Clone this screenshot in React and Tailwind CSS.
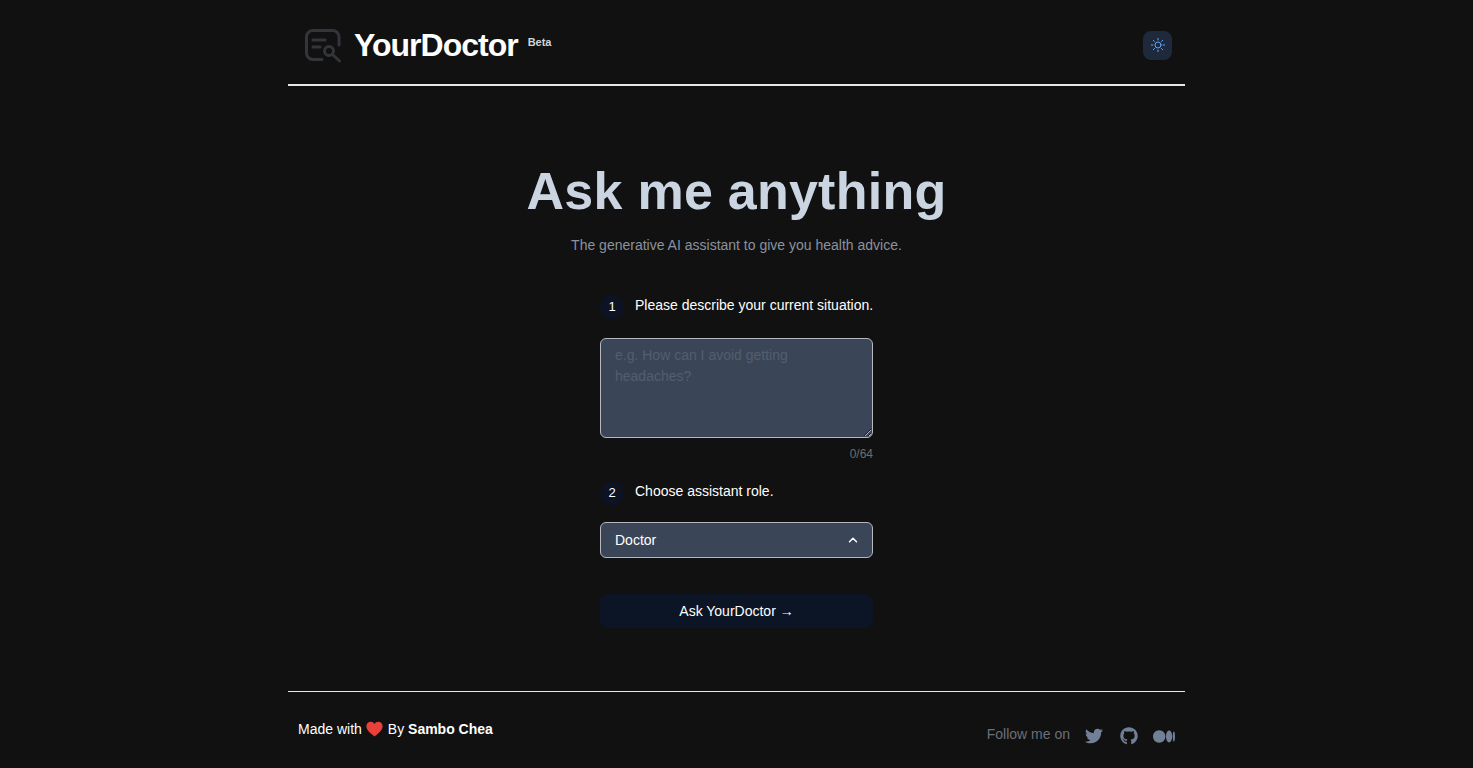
import React from "react";
import { FaTwitter, FaGithub } from "react-icons/fa";
import { ChevronUp } from "lucide-react";

function Sun() {
  return (
    <svg width="16" height="16" viewBox="0 0 24 24" fill="none" stroke="#60a5fa" strokeWidth="1.5" strokeLinecap="round">
      <circle cx="12" cy="12" r="4.5" />
      <path d="M12 2v2.5M12 19.5V22M2 12h2.5M19.5 12H22M4.9 4.9l1.8 1.8M17.3 17.3l1.8 1.8M4.9 19.1l1.8-1.8M17.3 6.7l1.8-1.8" />
    </svg>
  );
}

function Logo() {
  return (
    <svg width="38" height="36" viewBox="0 0 38 36" fill="none" stroke="#33353b" strokeWidth="3" strokeLinecap="round" strokeLinejoin="round">
      <path d="M18 32.5H9a6.5 6.5 0 0 1-6.5-6.5V10A6.5 6.5 0 0 1 9 3.5h19.5A6.5 6.5 0 0 1 35 10v8" />
      <path d="M9 13h12M9 20h7" />
      <circle cx="25" cy="24" r="4.5" />
      <path d="M29 28l6.5 6" />
    </svg>
  );
}

function Step({ n, children }) {
  return (
    <div className="flex items-start gap-[11px] h-[26px]">
      <span className="w-6 h-6 shrink-0 mt-[1px] rounded-full bg-[#0d1323] flex items-center justify-center text-[13px] text-white">{n}</span>
      <span className="text-[14px] leading-[22px] text-white whitespace-nowrap">{children}</span>
    </div>
  );
}

export default function App() {
  return (
    <div className="min-h-[768px] bg-[#111111] font-['Liberation_Sans',Arial,sans-serif]">
      <div className="w-[897px] mx-auto flex flex-col h-[768px]">
        <header className="h-[86px] shrink-0 border-b-2 border-[#e5e7eb] flex items-center justify-between pl-4 pr-[13px] pt-[6px]">
          <div className="flex items-center">
            <Logo />
            <h1 className="ml-3 text-[32px] leading-[40px] font-bold text-white tracking-[-1px]">YourDoctor</h1>
            <span className="ml-[10px] mb-[6px] text-[11px] leading-4 font-bold text-[#d1d5db]">Beta</span>
          </div>
          <button className="w-[29px] h-[29px] rounded-lg bg-[#1e293b] flex items-center justify-center">
            <Sun />
          </button>
        </header>

        <main className="flex-1 flex flex-col items-center">
          <h2 className="mt-[73px] text-[52px] leading-[64px] font-bold text-[#cbd5e1] tracking-[0.25px]">Ask me anything</h2>
          <p className="mt-[10px] text-[14px] leading-6 text-[#8b929e]">The generative AI assistant to give you health advice.</p>

          <div className="w-[273px] mt-[37px] flex flex-col">
            <Step n="1">Please describe your current situation.</Step>
            <textarea
              className="mt-[18px] w-full h-[100px] block rounded-md border-[1.5px] border-[#b4b8bf] bg-[#3a4657] px-[14px] py-[6px] text-[14px] leading-[21px] text-white placeholder:text-[#525e70] outline-none"
              placeholder="e.g. How can I avoid getting headaches?"
            />
            <div className="mt-[8px] text-right text-[12px] leading-4 text-[#6e6e6e]">0/64</div>
            <div className="mt-[18px]">
              <Step n="2">Choose assistant role.</Step>
            </div>
            <div className="mt-[16px] h-[36px] rounded-md border-[1.5px] border-[#b4b8bf] bg-[#3a4657] pl-[14px] pr-[12px] flex items-center justify-between text-[14px] text-white">
              <span>Doctor</span>
              <ChevronUp size={14} strokeWidth={2.5} />
            </div>
            <button className="mt-[36px] h-[34px] rounded-lg bg-[#0c1526] text-[14px] text-white">Ask YourDoctor →</button>
          </div>
        </main>

        <footer className="h-[77px] shrink-0 border-t border-[#e5e7eb] flex justify-between pl-[10px] pr-[10px]">
          <div className="pt-[27px] text-[14px] leading-5 text-white flex items-start">
            <span>Made with</span>
            <svg className="ml-[4px] mr-[5px] mt-[2px]" width="17" height="16" viewBox="0 0 24 22" fill="#e8413c"><path d="M12 21.5C5 15.8 0.5 11.8 0.5 7 0.5 3.4 3.3 0.8 6.6 0.8c2.2 0 4.2 1.1 5.4 3 1.2-1.9 3.2-3 5.4-3 3.3 0 6.1 2.6 6.1 6.2 0 4.8-4.5 8.8-11.5 14.5z"/></svg>
            <span>By <b className="font-bold">Sambo Chea</b></span>
          </div>
          <div className="pt-[32px] flex items-start text-[14px] leading-5 text-[#6b6f78]">
            <span>Follow me on</span>
            <div className="ml-[15px] mt-[3px] h-[18px] flex items-center text-[#718096]">
              <FaTwitter size={18} />
              <FaGithub size={18} className="ml-[17px]" />
              <svg className="ml-[15px]" width="22" height="13" viewBox="0 0 1043.63 592.71" fill="currentColor"><path d="M588.67 296.36c0 163.67-131.78 296.35-294.33 296.35S0 460 0 296.36 131.78 0 294.34 0s294.33 132.69 294.33 296.36M911.56 296.36c0 154.06-65.89 279-147.17 279s-147.17-124.94-147.17-279 65.88-279 147.16-279 147.17 124.9 147.17 279M1043.63 296.36c0 138-23.17 249.94-51.76 249.94s-51.75-111.91-51.75-249.94 23.17-249.94 51.75-249.94 51.76 111.9 51.76 249.94"/></svg>
            </div>
          </div>
        </footer>
      </div>
    </div>
  );
}
